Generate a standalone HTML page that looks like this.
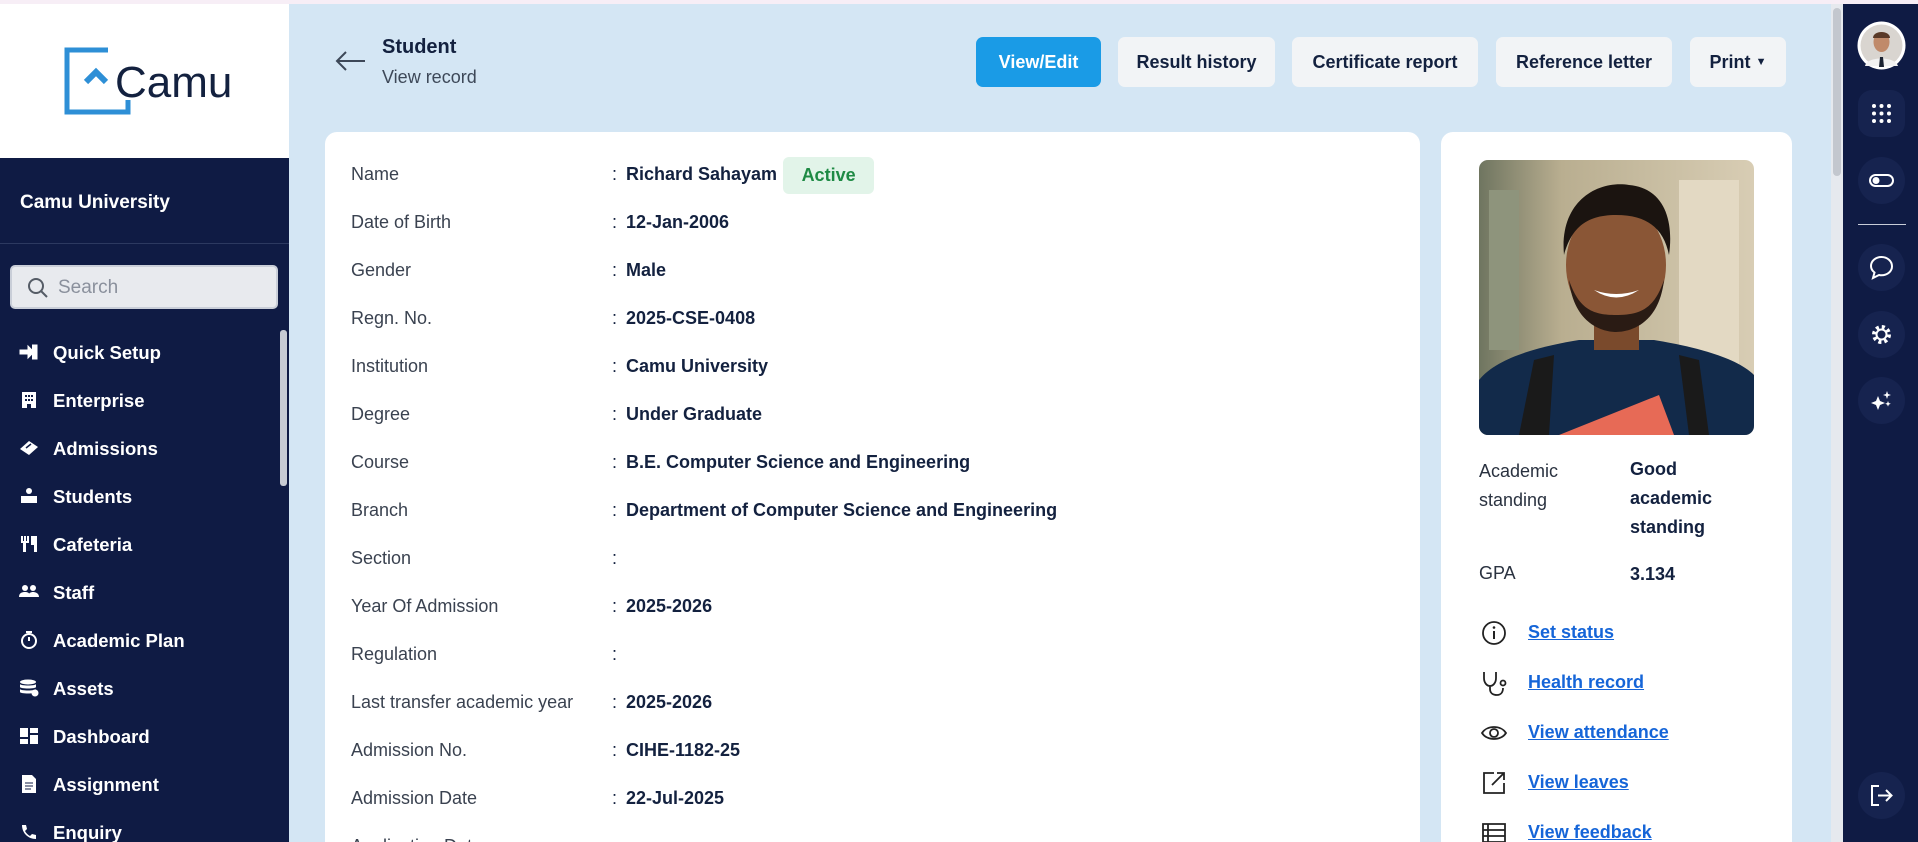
<!DOCTYPE html>
<html style="overflow:hidden;width:1918px;height:842px"><head><meta charset="utf-8"><style>
*{box-sizing:border-box;margin:0;padding:0}
body{width:1918px;height:842px;overflow:hidden;font-family:"Liberation Sans",sans-serif;background:#d4e6f4;position:relative}
.topline{position:absolute;left:0;top:0;width:1918px;height:4px;background:#f7eef6}
.side{position:absolute;left:0;top:4px;width:289px;height:838px;background:#0f1b44;overflow:hidden}
.logo{position:absolute;left:0;top:0;width:289px;height:154px;background:#fff}
.uni{position:absolute;left:20px;top:188px;color:#fff;font-weight:bold;font-size:19px}
.div1{position:absolute;left:0;top:239px;width:289px;height:1px;background:#2c3960}
.search{position:absolute;left:10px;top:261px;width:268px;height:44px;background:#e8eaee;border:2px solid #c9ced8;border-radius:5px;color:#8a909c;font-size:19px;padding:10px 0 0 46px}
.nav{position:absolute;left:0;color:#fff;font-size:18.5px;font-weight:bold;width:280px;height:30px}
.nav .ic{position:absolute;left:19px;top:3px;width:20px;height:18px}
.nav span{position:absolute;left:53px;top:2px}
.sscroll{position:absolute;left:280px;top:326px;width:7px;height:156px;background:#c8ccd4;border-radius:3px}
.hdr-t{position:absolute;left:382px;top:36px;font-size:20px;font-weight:bold;color:#13213f}
.hdr-s{position:absolute;left:382px;top:67px;font-size:18px;color:#3d4858}
.btn{position:absolute;top:37px;height:50px;border-radius:7px;background:#f2f4f6;color:#13213f;font-weight:bold;font-size:18px;text-align:center;line-height:50px}
.card{position:absolute;left:325px;top:132px;width:1095px;height:710px;background:#fff;border-radius:12px 12px 0 0}
.rcard{position:absolute;left:1441px;top:132px;width:351px;height:710px;background:#fff;border-radius:12px 12px 0 0}
.row{position:absolute;left:351px;font-size:18px;color:#3a4250;height:24px;line-height:24px}
.row .c{position:absolute;left:261px;color:#13213f}
.row .v{position:absolute;left:275px;font-weight:bold;color:#13213f;white-space:nowrap}
.badge{display:inline-block;margin:-7px 0 -7px 6px;width:91px;height:37px;background:#e2f4e9;border-radius:6px;color:#1e8a44;font-weight:bold;font-size:18px;text-align:center;line-height:37px;vertical-align:middle}
.rl{position:absolute;font-size:18px;color:#2a3240}
.rv{position:absolute;font-size:18px;font-weight:bold;color:#13213f;line-height:29px}
.lk{position:absolute;left:1528px;font-size:18px;font-weight:bold;color:#1565d8;text-decoration:underline}
.lki{position:absolute;left:1480px;width:28px;height:28px}
.rail{position:absolute;left:1843px;top:4px;width:75px;height:838px;background:#0f1b44}
.rb{position:absolute;left:1858px;width:47px;height:47px;border-radius:14px;background:#16234f}
.rb svg{position:absolute;left:11px;top:11px}
.mscroll{position:absolute;left:1831px;top:4px;width:12px;height:838px;background:#e6e9ee}
.mscroll div{position:absolute;left:2px;top:4px;width:8px;height:168px;background:#c3c7ce;border-radius:4px}
.clip{position:absolute;left:0;top:0;width:1918px;height:842px;overflow:hidden}
</style></head><body><div class="clip">
<div class="topline"></div>
<div class="side">
 <div class="logo">
  <svg width="289" height="154" viewBox="0 0 289 154">
   <path d="M108 46 H67 V108 H128 V96" fill="none" stroke="#2e8fd6" stroke-width="5"/>
   <path d="M86 78 L96 68 L106 78" fill="none" stroke="#2e8fd6" stroke-width="6"/>
   <text x="115" y="93" font-family="Liberation Sans" font-size="44" fill="#13213f">Camu</text>
  </svg>
 </div>
 <div class="uni">Camu University</div>
 <div class="div1"></div>
 <div class="search"><svg style="position:absolute;left:15px;top:10px" width="22" height="22" viewBox="0 0 22 22"><circle cx="9" cy="9" r="7" fill="none" stroke="#555c66" stroke-width="2"/><path d="M14 14 L20 20" stroke="#555c66" stroke-width="2"/></svg>Search</div>
 <div class="sscroll"></div>
<div class="nav" style="top:336px"><svg class="ic" viewBox="0 0 20 18"><path d="M1 7h8V3l6 6-6 6v-4H1z M13 2h5v14h-5" fill="#fff" stroke="#fff" stroke-width="1"/></svg><span>Quick Setup</span></div>
<div class="nav" style="top:384px"><svg class="ic" viewBox="0 0 20 18"><path d="M3 1h14v16H3z" fill="#fff"/><path d="M6 4h2v2H6zM9 4h2v2H9zM12 4h2v2h-2zM6 8h2v2H6zM9 8h2v2H9zM12 8h2v2h-2zM8 13h4v4H8z" fill="#0f1b44"/></svg><span>Enterprise</span></div>
<div class="nav" style="top:432px"><svg class="ic" viewBox="0 0 20 18"><path d="M1 10 L10 2 L19 8 L10 16z" fill="#fff"/><path d="M7 9l5-4" stroke="#0f1b44" stroke-width="1.5"/></svg><span>Admissions</span></div>
<div class="nav" style="top:480px"><svg class="ic" viewBox="0 0 20 18"><circle cx="10" cy="4" r="3" fill="#fff"/><path d="M2 9h16v7H2z" fill="#fff"/></svg><span>Students</span></div>
<div class="nav" style="top:528px"><svg class="ic" viewBox="0 0 20 18"><path d="M2 1h2v5h1V1h2v5h1V1h2v7H7v9H4V8H2zM12 1h6v16h-3V10h-3z" fill="#fff"/></svg><span>Cafeteria</span></div>
<div class="nav" style="top:576px"><svg class="ic" viewBox="0 0 20 18"><circle cx="6" cy="5" r="3" fill="#fff"/><circle cx="14" cy="5" r="3" fill="#fff"/><path d="M0 14c0-4 3-5 6-5s5 1 5 5zM9 14c0-4 3-5 5-5s6 1 6 5z" fill="#fff"/></svg><span>Staff</span></div>
<div class="nav" style="top:624px"><svg class="ic" viewBox="0 0 20 18"><circle cx="10" cy="10" r="7" fill="none" stroke="#fff" stroke-width="2"/><path d="M10 10V6M7 1h6" stroke="#fff" stroke-width="2"/></svg><span>Academic Plan</span></div>
<div class="nav" style="top:672px"><svg class="ic" viewBox="0 0 20 18"><ellipse cx="9" cy="3" rx="8" ry="2.5" fill="#fff"/><path d="M1 5v3c0 2 16 2 16 0V5c0 2-16 2-16 0zM1 10v3c0 2 16 2 16 0v-3c0 2-16 2-16 0z" fill="#fff"/><circle cx="16" cy="14" r="3.5" fill="#fff"/></svg><span>Assets</span></div>
<div class="nav" style="top:720px"><svg class="ic" viewBox="0 0 20 18"><path d="M1 1h8v9H1zM11 1h8v5h-8zM11 8h8v9h-8zM1 12h8v5H1z" fill="#fff"/></svg><span>Dashboard</span></div>
<div class="nav" style="top:768px"><svg class="ic" viewBox="0 0 20 18"><path d="M3 0h10l4 4v14H3z" fill="#fff"/><path d="M6 8h8M6 11h8M6 14h6" stroke="#0f1b44" stroke-width="1"/></svg><span>Assignment</span></div>
<div class="nav" style="top:816px"><svg class="ic" viewBox="0 0 20 18"><path d="M3 2l4 0 1 4-2 2c1 2 3 4 5 5l2-2 4 1v4c-8 0-14-6-14-14z" fill="#fff"/></svg><span>Enquiry</span></div>
</div>

<svg style="position:absolute;left:334px;top:50px" width="32" height="22" viewBox="0 0 32 22"><path d="M31 11H3M12 2L3 11l9 9" fill="none" stroke="#3d4858" stroke-width="2"/></svg>
<div class="hdr-t">Student</div>
<div class="hdr-s">View record</div>
<div class="btn" style="left:976px;width:125px;background:#1a9be6;color:#fff">View/Edit</div>
<div class="btn" style="left:1118px;width:157px">Result history</div>
<div class="btn" style="left:1292px;width:186px">Certificate report</div>
<div class="btn" style="left:1496px;width:176px">Reference letter</div>
<div class="btn" style="left:1690px;width:96px">Print <span style="font-size:11px;vertical-align:3px">▼</span></div>

<div class="card"></div>
<div class="row" style="top:162px">Name<span class="c">:</span><span class="v">Richard Sahayam<span class="badge">Active</span></span></div>
<div class="row" style="top:210px">Date of Birth<span class="c">:</span><span class="v">12-Jan-2006</span></div>
<div class="row" style="top:258px">Gender<span class="c">:</span><span class="v">Male</span></div>
<div class="row" style="top:306px">Regn. No.<span class="c">:</span><span class="v">2025-CSE-0408</span></div>
<div class="row" style="top:354px">Institution<span class="c">:</span><span class="v">Camu University</span></div>
<div class="row" style="top:402px">Degree<span class="c">:</span><span class="v">Under Graduate</span></div>
<div class="row" style="top:450px">Course<span class="c">:</span><span class="v">B.E. Computer Science and Engineering</span></div>
<div class="row" style="top:498px">Branch<span class="c">:</span><span class="v">Department of Computer Science and Engineering</span></div>
<div class="row" style="top:546px">Section<span class="c">:</span></div>
<div class="row" style="top:594px">Year Of Admission<span class="c">:</span><span class="v">2025-2026</span></div>
<div class="row" style="top:642px">Regulation<span class="c">:</span></div>
<div class="row" style="top:690px">Last transfer academic year<span class="c">:</span><span class="v">2025-2026</span></div>
<div class="row" style="top:738px">Admission No.<span class="c">:</span><span class="v">CIHE-1182-25</span></div>
<div class="row" style="top:786px">Admission Date<span class="c">:</span><span class="v">22-Jul-2025</span></div>
<div class="row" style="top:834px">Application Date<span class="c">:</span></div>

<div class="rcard"></div>
<svg style="position:absolute;left:1479px;top:160px;border-radius:9px" width="275" height="275" viewBox="0 0 275 275">
 <defs><linearGradient id="bg" x1="0" x2="1"><stop offset="0" stop-color="#6f7560"/><stop offset="0.3" stop-color="#b9ae90"/><stop offset="1" stop-color="#d8cdb4"/></linearGradient></defs>
 <rect width="275" height="275" fill="url(#bg)"/>
 <rect x="10" y="30" width="30" height="160" fill="#8e947c"/>
 <rect x="200" y="20" width="60" height="200" fill="#e3d9c3"/>
 <path d="M0 275 V220 C20 195 70 185 100 180 L175 180 C205 185 255 195 275 215 V275z" fill="#122a4a"/>
 <path d="M40 275 L55 200 L75 195 L70 275z M230 275 L220 200 L200 195 L210 275z" fill="#1a1a1a"/>
 <path d="M80 275 L180 235 L195 275z" fill="#e76a56"/>
 <rect x="115" y="150" width="45" height="40" fill="#7a4a2c"/>
 <ellipse cx="137" cy="105" rx="50" ry="62" fill="#8a5636"/>
 <path d="M85 95 C80 40 120 20 150 25 C185 28 195 60 190 95 C185 70 170 55 137 55 C105 55 92 70 85 95z" fill="#1b1410"/>
 <path d="M90 120 C95 165 125 172 137 172 C150 172 180 165 185 120 C175 150 160 155 137 155 C115 155 100 150 90 120z" fill="#2a1b14"/>
 <path d="M115 130 Q137 145 160 130 Q137 138 115 130z" fill="#fff"/>
</svg>
<div class="rl" style="left:1479px;top:457px;line-height:29px">Academic<br>standing</div>
<div class="rv" style="left:1630px;top:455px">Good<br>academic<br>standing</div>
<div class="rl" style="left:1479px;top:563px">GPA</div>
<div class="rv" style="left:1630px;top:560px">3.134</div>

<svg class="lki" style="top:619px" viewBox="0 0 28 28"><circle cx="14" cy="14" r="11" fill="none" stroke="#222" stroke-width="1.8"/><path d="M14 12v8" stroke="#222" stroke-width="2"/><circle cx="14" cy="8.5" r="1.3" fill="#222"/></svg>
<div class="lk" style="top:622px">Set status</div>
<svg class="lki" style="top:669px" viewBox="0 0 28 28"><path d="M4 3v6c0 5 3 8 6 8s6-3 6-8V3M10 17v3c0 4 3 6 7 6s6-3 6-7" fill="none" stroke="#222" stroke-width="1.8"/><circle cx="23" cy="14" r="2.5" fill="none" stroke="#222" stroke-width="1.8"/></svg>
<div class="lk" style="top:672px">Health record</div>
<svg class="lki" style="top:719px" viewBox="0 0 28 28"><path d="M2 14C7 6 21 6 26 14C21 22 7 22 2 14z" fill="none" stroke="#222" stroke-width="1.8"/><circle cx="14" cy="14" r="4" fill="none" stroke="#222" stroke-width="1.8"/></svg>
<div class="lk" style="top:722px">View attendance</div>
<svg class="lki" style="top:769px" viewBox="0 0 28 28"><path d="M14 4H4v20h20V14M12 16L24 4M17 4h7v7" fill="none" stroke="#222" stroke-width="1.8"/></svg>
<div class="lk" style="top:772px">View leaves</div>
<svg class="lki" style="top:819px" viewBox="0 0 28 28"><path d="M3 5h22v18H3zM3 11h22M3 17h22M8 5v18" fill="none" stroke="#222" stroke-width="1.8"/></svg>
<div class="lk" style="top:822px">View feedback</div>

<div class="mscroll"><div></div></div>
<div class="rail"></div>
<svg style="position:absolute;left:1857px;top:21px" width="49" height="49" viewBox="0 0 49 49"><circle cx="24.5" cy="24.5" r="24" fill="#fff"/><circle cx="24.5" cy="24.5" r="21" fill="#d9d5d0"/><ellipse cx="24.5" cy="21" rx="8" ry="10" fill="#c08a6a"/><path d="M16 17c0-8 17-8 17 0" fill="#5a3a28"/><path d="M8 45c2-10 30-10 33 0z" fill="#f2f2f2"/><path d="M23 36h3l1 10h-5z" fill="#1c2433"/></svg>
<div class="rb" style="top:90px"><svg width="25" height="25" viewBox="0 0 25 25" fill="#fff"><circle cx="5" cy="5" r="2"/><circle cx="12.5" cy="5" r="2"/><circle cx="20" cy="5" r="2"/><circle cx="5" cy="12.5" r="2"/><circle cx="12.5" cy="12.5" r="2"/><circle cx="20" cy="12.5" r="2"/><circle cx="5" cy="20" r="2"/><circle cx="12.5" cy="20" r="2"/><circle cx="20" cy="20" r="2"/></svg></div>
<div class="rb" style="top:157px;border-radius:24px"><svg width="25" height="25" viewBox="0 0 25 25"><rect x="1" y="7" width="23" height="11" rx="5.5" fill="none" stroke="#fff" stroke-width="2"/><circle cx="7" cy="12.5" r="3.5" fill="#fff"/></svg></div>
<div style="position:absolute;left:1858px;top:224px;width:48px;height:1px;background:#c8cdd8"></div>
<div class="rb" style="top:244px;border-radius:24px"><svg width="25" height="25" viewBox="0 0 25 25"><path d="M12.5 2C6.5 2 2 6 2 11c0 3 1.5 5 3.5 6.5L4 23l6-3c1 .2 1.8.3 2.5.3 6 0 10.5-4 10.5-9S18.5 2 12.5 2z" fill="none" stroke="#fff" stroke-width="2"/></svg></div>
<div class="rb" style="top:311px;border-radius:24px"><svg width="25" height="25" viewBox="0 0 25 25"><circle cx="12.5" cy="12.5" r="7.5" fill="none" stroke="#fff" stroke-width="4" stroke-dasharray="3 2.9"/><circle cx="12.5" cy="12.5" r="5" fill="none" stroke="#fff" stroke-width="2"/></svg></div>
<div class="rb" style="top:377px;border-radius:24px"><svg width="25" height="25" viewBox="0 0 25 25" fill="#fff"><path d="M9 8l2 5 5 2-5 2-2 5-2-5-5-2 5-2z"/><path d="M18 3l1 3 3 1-3 1-1 3-1-3-3-1 3-1z"/><path d="M19 13l.8 2 2 .8-2 .8-.8 2-.8-2-2-.8 2-.8z"/></svg></div>
<div class="rb" style="top:772px;border-radius:24px"><svg width="25" height="25" viewBox="0 0 25 25"><path d="M10 3H3v19h7M9 12.5h13M17 7l5.5 5.5L17 18" fill="none" stroke="#fff" stroke-width="2"/></svg></div>
</div></body></html>
